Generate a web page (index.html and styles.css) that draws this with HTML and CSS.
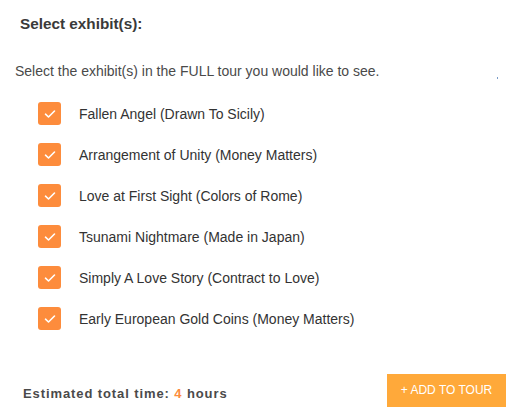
FILE: index.html
```html
<!DOCTYPE html>
<html>
<head>
<meta charset="utf-8">
<link rel="stylesheet" href="styles.css">
</head>
<body>
<div class="panel">
  <h2 class="title">Select exhibit(s):</h2>
  <p class="intro">Select the exhibit(s) in the FULL tour you would like to see.<span class="dot"></span></p>
  <ul class="list">
    <li class="item"><span class="box"><svg viewBox="0 0 12 10" width="12" height="10"><path d="M1.5 5.2 L4.5 8 L10.5 2" fill="none" stroke="#fff" stroke-width="1.6" stroke-linecap="round" stroke-linejoin="round"/></svg></span><span class="label">Fallen Angel (Drawn To Sicily)</span></li>
    <li class="item"><span class="box"><svg viewBox="0 0 12 10" width="12" height="10"><path d="M1.5 5.2 L4.5 8 L10.5 2" fill="none" stroke="#fff" stroke-width="1.6" stroke-linecap="round" stroke-linejoin="round"/></svg></span><span class="label">Arrangement of Unity (Money Matters)</span></li>
    <li class="item"><span class="box"><svg viewBox="0 0 12 10" width="12" height="10"><path d="M1.5 5.2 L4.5 8 L10.5 2" fill="none" stroke="#fff" stroke-width="1.6" stroke-linecap="round" stroke-linejoin="round"/></svg></span><span class="label">Love at First Sight (Colors of Rome)</span></li>
    <li class="item"><span class="box"><svg viewBox="0 0 12 10" width="12" height="10"><path d="M1.5 5.2 L4.5 8 L10.5 2" fill="none" stroke="#fff" stroke-width="1.6" stroke-linecap="round" stroke-linejoin="round"/></svg></span><span class="label">Tsunami Nightmare (Made in Japan)</span></li>
    <li class="item"><span class="box"><svg viewBox="0 0 12 10" width="12" height="10"><path d="M1.5 5.2 L4.5 8 L10.5 2" fill="none" stroke="#fff" stroke-width="1.6" stroke-linecap="round" stroke-linejoin="round"/></svg></span><span class="label">Simply A Love Story (Contract to Love)</span></li>
    <li class="item"><span class="box"><svg viewBox="0 0 12 10" width="12" height="10"><path d="M1.5 5.2 L4.5 8 L10.5 2" fill="none" stroke="#fff" stroke-width="1.6" stroke-linecap="round" stroke-linejoin="round"/></svg></span><span class="label">Early European Gold Coins (Money Matters)</span></li>
  </ul>
  <div class="footer">
    <div class="total">Estimated total time: <span class="hours">4</span> hours</div>
    <button class="add">+ ADD TO TOUR</button>
  </div>
</div>
</body>
</html>
```

FILE: styles.css
```css
html, body {
  margin: 0;
  padding: 0;
  background: #fff;
}
body {
  font-family: "Liberation Sans", Arial, sans-serif;
  width: 521px;
  height: 419px;
  overflow: hidden;
}
.panel {
  padding: 0 15px 0 15px;
}
.title {
  margin: 0;
  padding: 15px 0 0 5px;
  font-size: 15.3px;
  font-weight: bold;
  color: #3a3a3a;
  line-height: 18px;
}
.intro {
  margin: 0;
  padding-top: 30px;
  font-size: 14px;
  color: #4a4a4a;
  line-height: 16px;
  position: relative;
}
.dot {
  position: absolute;
  left: 482px;
  top: 44px;
  width: 1px;
  height: 2px;
  background: #7a9cc8;
}
.list {
  list-style: none;
  margin: 0;
  padding: 23px 0 0 23px;
  display: flex;
  flex-direction: column;
  gap: 18px;
}
.item {
  display: flex;
  align-items: center;
  gap: 18px;
  height: 23px;
}
.box {
  width: 23px;
  height: 23px;
  border-radius: 3px;
  background: #fd8c3c;
  display: flex;
  align-items: center;
  justify-content: center;
}
.label {
  font-size: 14px;
  color: #333;
}
.footer {
  display: flex;
  justify-content: space-between;
  align-items: center;
  margin-top: 44px;
  padding-left: 8px;
}
.total {
  font-size: 13px;
  font-weight: bold;
  color: #4a4a4a;
  letter-spacing: 0.9px;
  padding-top: 6px;
}
.hours {
  color: #fd8c3c;
}
.add {
  width: 119px;
  height: 33px;
  border: none;
  background: #ffa93a;
  color: #fff;
  font-family: "Liberation Sans", Arial, sans-serif;
  font-size: 12px;
  padding: 0 0 2px 0;
  margin-right: 0;
}
```
